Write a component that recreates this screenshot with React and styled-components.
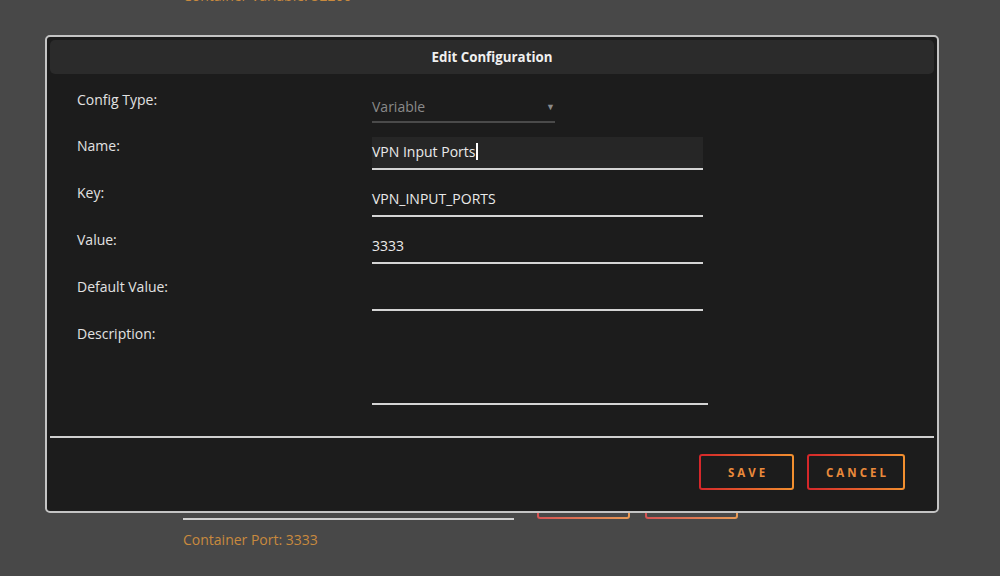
import React from "react";
import styled, { createGlobalStyle } from "styled-components";

const Global = createGlobalStyle`
  html, body { margin: 0; padding: 0; }
  body {
    background: #484848;
    font-family: "Open Sans", "Noto Sans", sans-serif;
    width: 1000px;
    height: 576px;
    overflow: hidden;
  }
`;

const Page = styled.div`
  position: relative;
  width: 1000px;
  height: 576px;
  overflow: hidden;
`;

const BackColumn = styled.div`
  display: flex;
  flex-direction: column;
  padding-left: 183px;
`;

const OrangeNote = styled.div`
  color: #c98a3e;
  font-size: 14px;
  line-height: 18px;
  margin-top: ${(p) => p.$top || 0}px;
`;

const BackRow = styled.div`
  display: flex;
  align-items: flex-end;
  gap: 23px;
  margin-top: ${(p) => p.$top || 0}px;
`;

const BackField = styled.div`
  width: 331px;
  height: 33px;
  border-bottom: 2px solid #cfcfcf;
  box-sizing: border-box;
  margin-bottom: -1px;
`;

const BackButtons = styled.div`
  display: flex;
  gap: 15px;
`;

const BackButton = styled.div`
  width: 93px;
  height: 38px;
  box-sizing: border-box;
  border: 2px solid transparent;
  border-radius: 3px;
  background: linear-gradient(#484848, #484848) padding-box,
    linear-gradient(90deg, #d65454, #e89a55) border-box;
`;

const Modal = styled.div`
  position: absolute;
  left: 45px;
  top: 35px;
  width: 894px;
  height: 478px;
  box-sizing: border-box;
  border: 2px solid #c4c4c4;
  border-radius: 5px;
  padding: 3px;
  background: #1c1c1c;
  display: flex;
  flex-direction: column;
`;

const Header = styled.div`
  height: 34px;
  background: #2b2b2b;
  border-radius: 5px;
  display: flex;
  align-items: center;
  justify-content: center;
  color: #f0f0f0;
  font-weight: 700;
  font-size: 13.3px;
`;

const Body = styled.div`
  display: grid;
  grid-template-columns: 295px 336px;
  row-gap: 14px;
  padding: 16px 0 31px 27px;
`;

const Label = styled.div`
  color: #e2e2e2;
  font-size: 14px;
  line-height: 18px;
  padding-top: ${(p) => p.$pad || 0}px;
`;

const Field = styled.div`
  width: ${(p) => p.$w || 331}px;
  height: ${(p) => p.$h || 33}px;
  box-sizing: border-box;
  border-bottom: 2px solid ${(p) => (p.$muted ? "#4a4a4a" : "#d4d4d4")};
  background: ${(p) => (p.$active ? "#262626" : "transparent")};
  display: flex;
  align-items: ${(p) => (p.$top ? "flex-start" : "center")};
  color: ${(p) => (p.$muted ? "#8a8a8a" : "#eaeaea")};
  font-size: 14px;
  padding-bottom: 2px;
`;

const SelectField = styled(Field)`
  width: 183px;
  justify-content: space-between;
  padding-right: 0;
  padding-top: 3px;
`;

const Arrow = styled.span`
  color: #8a8a8a;
  font-size: 9px;
`;

const Caret = styled.span`
  display: inline-block;
  width: 2px;
  height: 17px;
  background: #ffffff;
  margin-left: 1px;
`;

const Divider = styled.div`
  height: 2px;
  background: #cfcfcf;
`;

const Footer = styled.div`
  display: flex;
  justify-content: flex-end;
  gap: 13px;
  padding: 16px 29px 0 0;
`;

const ActionButton = styled.button`
  width: ${(p) => p.$w}px;
  height: 36px;
  box-sizing: border-box;
  border: 2px solid transparent;
  border-radius: 3px;
  background: linear-gradient(#1c1c1c, #1c1c1c) padding-box,
    linear-gradient(90deg, #d5262a, #f2902f) border-box;
  color: #ea8a3b;
  font-family: "Open Sans", "Noto Sans", sans-serif;
  font-weight: 700;
  font-size: 11.5px;
  letter-spacing: 3px;
  padding: 0 0 0 3px;
  cursor: pointer;
`;

const rows = [
  { label: "Key:", value: "VPN_INPUT_PORTS" },
  { label: "Value:", value: "3333" },
  { label: "Default Value:", value: "" },
];

export default function App() {
  return (
    <Page>
      <Global />
      <BackColumn>
        <OrangeNote $top={-13}>Container Variable: 52200</OrangeNote>
        <BackRow $top={476}>
          <BackField />
          <BackButtons>
            <BackButton />
            <BackButton />
          </BackButtons>
        </BackRow>
        <OrangeNote $top={12}>Container Port: 3333</OrangeNote>
      </BackColumn>

      <Modal>
        <Header>Edit Configuration</Header>
        <Body>
          <Label $pad={1}>Config Type:</Label>
          <SelectField $muted>
            <span>Variable</span>
            <Arrow>▼</Arrow>
          </SelectField>

          <Label>Name:</Label>
          <Field $active>
            VPN Input Ports
            <Caret />
          </Field>

          {rows.map((r) => (
            <React.Fragment key={r.label}>
              <Label>{r.label}</Label>
              <Field>{r.value}</Field>
            </React.Fragment>
          ))}

          <Label>Description:</Label>
          <Field $w={336} $h={80} $top />
        </Body>
        <Divider />
        <Footer>
          <ActionButton $w={95}>SAVE</ActionButton>
          <ActionButton $w={98}>CANCEL</ActionButton>
        </Footer>
      </Modal>
    </Page>
  );
}
